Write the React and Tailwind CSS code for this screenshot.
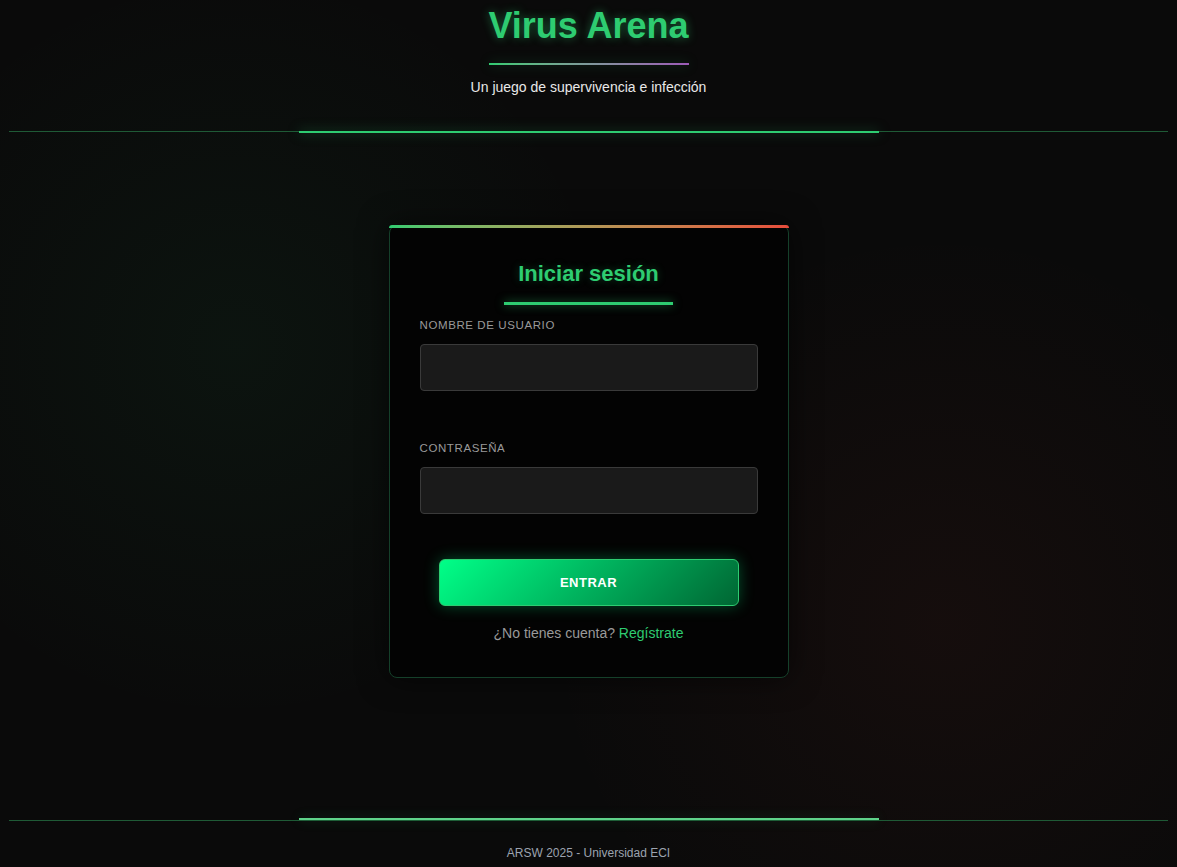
import React from "react";

export default function App() {
  return (
    <div
      className="min-h-screen flex flex-col bg-[#0a0a0a] bg-[radial-gradient(circle_at_20%_40%,rgba(46,204,113,0.05),transparent_35%),radial-gradient(circle_at_80%_72%,rgba(231,76,60,0.05),transparent_35%)] text-[#e5e5e5]"
      style={{ fontFamily: '"Liberation Sans", Arial, sans-serif' }}
    >
      <header className="mx-[9px] relative border-b border-[#1f5a36] pt-[4px] pb-[34px] text-center">
        <h1 className="text-[36px] leading-[1.2] font-bold text-[#2ecc71] [text-shadow:0_0_10px_rgba(46,204,113,0.45)]">
          Virus Arena
        </h1>
        <div className="mx-auto mt-[16px] w-[200px] h-[2px] bg-gradient-to-r from-[#2ecc71] to-[#9b59b6] shadow-[0_0_12px_rgba(46,204,113,0.35)]" />
        <p className="mt-[12px] text-[14px] leading-[20px] text-[#e8e8e8]">
          Un juego de supervivencia e infección
        </p>
        <div className="absolute left-1/2 -translate-x-1/2 bottom-[-2px] w-[580px] h-[2px] bg-[#2ecc71] shadow-[0_0_12px_rgba(46,204,113,0.5)]" />
      </header>

      <main className="flex-1 flex justify-center pt-[93px]">
        <div className="relative self-start w-[400px] rounded-lg border border-[#15402a] bg-[#030303] px-[30px] pt-[35px] pb-[34px] shadow-[0_0_30px_rgba(0,0,0,0.6)]">
          <div className="absolute -top-px -left-px -right-px h-[3px] rounded-t-lg bg-gradient-to-r from-[#2ecc71] to-[#e74c3c]" />
          <h2 className="text-center text-[22px] leading-[26px] font-bold text-[#2ecc71] [text-shadow:0_0_8px_rgba(46,204,113,0.3)]">
            Iniciar sesión
          </h2>
          <div className="mx-auto mt-[15px] w-[169px] h-[3px] bg-[#2ecc71] shadow-[0_0_10px_rgba(46,204,113,0.6)]" />

          <label className="block mt-[12px] text-[11.5px] leading-[16px] tracking-[0.6px] text-[#9a9a9a]">
            NOMBRE DE USUARIO
          </label>
          <input
            type="text"
            className="block mt-[11px] w-full h-[47px] rounded-[4px] border border-[#3a3a3a] bg-[#1a1a1a] px-3 text-[#e5e5e5] outline-none"
          />

          <label className="block mt-[49px] text-[11.5px] leading-[16px] tracking-[0.6px] text-[#9a9a9a]">
            CONTRASEÑA
          </label>
          <input
            type="password"
            className="block mt-[11px] w-full h-[47px] rounded-[4px] border border-[#3a3a3a] bg-[#1a1a1a] px-3 text-[#e5e5e5] outline-none"
          />

          <button className="block mx-auto mt-[45px] w-[300px] h-[47px] rounded-[6px] border border-[#2ecc71] bg-[linear-gradient(135deg,#00ff88,#006633)] text-[13px] font-bold tracking-[0.5px] text-white shadow-[0_0_15px_rgba(0,255,136,0.3)]">
            ENTRAR
          </button>

          <p className="mt-[17px] text-center text-[14px] leading-[20px] text-[#9a9a9a]">
            ¿No tienes cuenta? <span className="text-[#2ecc71]">Regístrate</span>
          </p>
        </div>
      </main>

      <footer className="mx-[9px] relative border-t border-[#1f5a36] pt-[24px] pb-[6px] text-center">
        <div className="absolute left-1/2 -translate-x-1/2 top-[-3px] w-[580px] h-[2px] bg-[#5fd38a] shadow-[0_0_12px_rgba(46,204,113,0.3)]" />
        <p className="text-[12px] leading-[16px] text-[#9ca3af]">ARSW 2025 - Universidad ECI</p>
      </footer>
    </div>
  );
}
